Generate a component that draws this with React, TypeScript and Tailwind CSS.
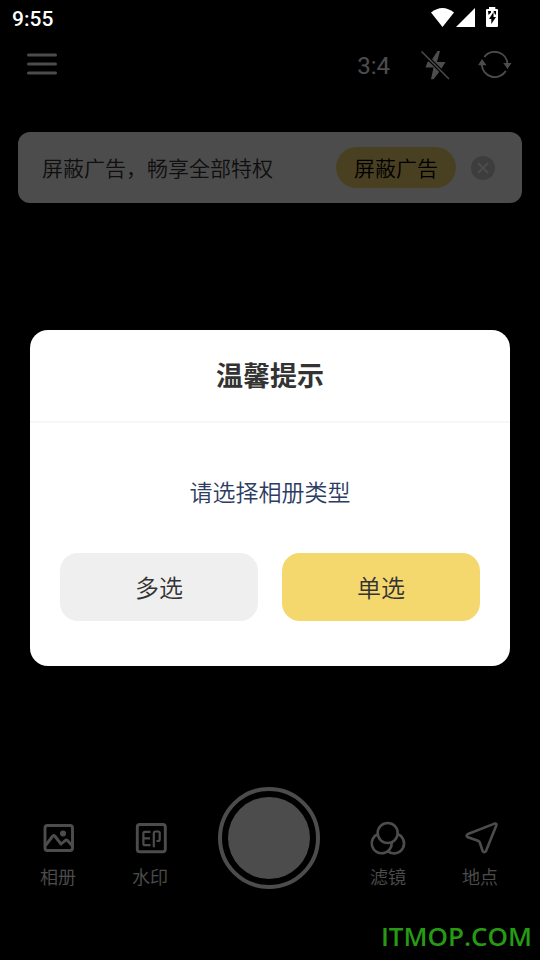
import type { ReactNode } from "react";

const LATIN = "font-['Roboto','Noto_Sans_CJK_SC',sans-serif] font-normal";
const CJK = "font-['Noto_Sans_CJK_SC',sans-serif] font-[350]";

function StatusBar() {
  return (
    <header className={`flex h-9 items-center justify-between bg-black pl-3 pr-10 text-white ${LATIN}`}>
      <time className="pt-0.5 text-[21px] leading-6 font-medium">9:55</time>
      <svg width="70" height="22" viewBox="430 7 70 22" fill="currentColor" aria-label="状态">
        <path d="M431 12.500 Q442.500 3.500 454 12.500 L442.500 27 Z" />
        <path d="M456 27 L475 8 V27 Z" />
        <path d="M487 9 H489 V7 H495.300 V9 H497 Q498 9 498 10 V26 Q498 27 497 27 H487 Q486 27 486 26 V10 Q486 9 487 9 Z" />
        <path d="M493.500 12 L489 19 H491.300 V24 L496 17 H493.500 Z" fill="#000" />
        <path d="M488 11 H491 V12.500 L488.500 15 Z M493.500 11 H496 V14.500 H495 Z" fill="#000" />
      </svg>
    </header>
  );
}

function Toolbar() {
  return (
    <nav className={`flex h-15 items-center pl-[27px] pr-7 ${LATIN}`}>
      <button type="button" aria-label="菜单" className="mr-auto pb-1">
        <svg width="30" height="22" viewBox="0 0 30 22" stroke="currentColor" strokeWidth="3" strokeLinecap="round">
          <path d="M1.500 2H28.500M1.500 11H28.500M1.500 20H28.500" />
        </svg>
      </button>
      <button type="button" className="mr-[30px] text-2xl">3:4</button>
      <button type="button" aria-label="闪光灯" className="mr-7">
        <svg width="30" height="30" viewBox="420 51 30 30" fill="currentColor">
          <path d="M440 51 H437.500 L432 59.500 L427.500 62 L425.500 67.500 H433.500 L431 79.300 H433.500 L440 71 L445.500 62 H437 Z" />
          <path d="M421 51 L449.500 79.500" stroke="#000" strokeWidth="3.800" />
          <path d="M421.500 51.500 L449 79" stroke="currentColor" strokeWidth="1.500" />
        </svg>
      </button>
      <button type="button" aria-label="切换镜头">
        <svg width="34" height="30" viewBox="478 51 34 30" fill="none" stroke="currentColor" strokeWidth="1.900">
          <path d="M484.300 57 A13 13 0 0 1 507.600 64" />
          <path d="M505.800 71 A13 13 0 0 1 481.800 65" />
          <path d="M478 65.300 L482 59 L486.500 65.300 ZM503.300 63 H511.500 L507.500 69 Z" fill="currentColor" stroke="none" />
        </svg>
      </button>
    </nav>
  );
}

function PromoBar() {
  return (
    <section className="mx-[18px] mt-9 flex h-[71px] items-center rounded-xl bg-white pl-6 pr-[27px] text-[#333333]">
      <p className="mr-auto text-[21px]">屏蔽广告，畅享全部特权</p>
      <button type="button" className="mr-[15px] h-[41px] rounded-full bg-[#f5d76e] px-[18px] text-[21px] text-black">
        屏蔽广告
      </button>
      <button type="button" aria-label="关闭">
        <svg width="24" height="24" viewBox="0 0 24 24" fill="none">
          <circle cx="12" cy="12" r="12" fill="#cccccc" />
          <path d="M7 7L17 17M17 7L7 17" stroke="#fff" strokeWidth="1.800" />
        </svg>
      </button>
    </section>
  );
}

function Tool({ label, children }: { label: string; children: ReactNode }) {
  return (
    <button type="button" className="flex w-[92px] flex-col items-center gap-1.5 text-lg leading-7">
      <svg
        width="36"
        height="36"
        viewBox="0 0 36 36"
        fill="none"
        stroke="currentColor"
        strokeWidth="2.900"
        strokeLinejoin="round"
        className="overflow-visible"
      >
        {children}
      </svg>
      {label}
    </button>
  );
}

function CameraControls() {
  return (
    <footer className="mt-auto flex items-center justify-between pl-3 pr-3.5 pb-[70px]">
      <div className="flex pt-[34px]">
        <Tool label="相册">
          <rect x="5" y="5.500" width="27.500" height="25" rx="2.500" />
          <path d="M5.500 25.500 L12.800 16 Q13.800 15 14.800 16 L21 24 L25.500 20.300 Q26.500 19.600 27.500 20.500 L32 25.500" />
          <circle cx="23" cy="13.500" r="3" fill="currentColor" stroke="none" />
        </Tool>
        <Tool label="水印">
          <rect x="5.300" y="4.500" width="28" height="27.300" rx="2.500" />
          <path
            strokeWidth="2.200"
            d="M18.500 11.800H13Q11.400 11.800 11.400 13.300V23.700Q11.400 25.200 13 25.200H18.500M11.400 18.300H18M21.800 27.300V13.300Q21.800 11.500 23.500 11.500H26Q27.700 11.500 27.700 13V19.500Q27.700 21 26 21H24.500"
          />
        </Tool>
      </div>
      <button
        type="button"
        aria-label="拍照"
        className="flex size-[102px] items-center justify-center rounded-full border-4 border-current"
      >
        <span className="size-[82px] rounded-full bg-current" />
      </button>
      <div className="flex pt-[34px]">
        <Tool label="滤镜">
          <g strokeWidth="2.600">
            <circle cx="17.700" cy="13" r="10" />
            <path d="M8 14 A10 10 0 1 0 21.700 22.500" />
            <path d="M27.300 14 A10 10 0 1 1 17.500 31" />
          </g>
        </Tool>
        <Tool label="地点">
          <path
            strokeWidth="2.600"
            d="M32.500 3.600 Q35.200 3 34.300 5.500 L24 31 Q22.300 33.500 20.600 31 L17.800 22.500 Q17.300 21.200 16 20.700 L6 17.300 Q3.200 15.800 6 14 Z"
          />
        </Tool>
      </div>
    </footer>
  );
}

function AlbumDialog() {
  return (
    <div className="absolute inset-x-0 top-9 bottom-0 flex items-center bg-black/70 px-[30px]">
      <section role="dialog" aria-modal="true" aria-labelledby="dialog-title" className="w-full rounded-[18px] bg-white">
        <h2
          id="dialog-title"
          className="flex h-[93px] items-center justify-center border-b-2 border-[#f3f7fa] text-[27px] font-bold text-[#333333]"
        >
          温馨提示
        </h2>
        <p className="pt-[50px] text-center text-[23px] leading-9 text-[#2d3c62]">请选择相册类型</p>
        <div className="flex gap-6 px-[30px] pt-11 pb-[45px] text-2xl text-[#333333]">
          <button type="button" className="h-[68px] flex-1 rounded-[18px] bg-[#efefef]">多选</button>
          <button type="button" className="h-[68px] flex-1 rounded-[18px] bg-[#f4d76d]">单选</button>
        </div>
      </section>
    </div>
  );
}

export default function App() {
  return (
    <main lang="zh-CN" className={`relative flex min-h-screen flex-col bg-black text-white ${CJK}`}>
      <StatusBar />
      <Toolbar />
      <PromoBar />
      <CameraControls />
      <AlbumDialog />
      <span className="absolute right-2 bottom-2 font-['Open_Sans',sans-serif] text-[26px] leading-8 font-semibold text-[#279a14]">
        ITMOP.COM
      </span>
    </main>
  );
}
